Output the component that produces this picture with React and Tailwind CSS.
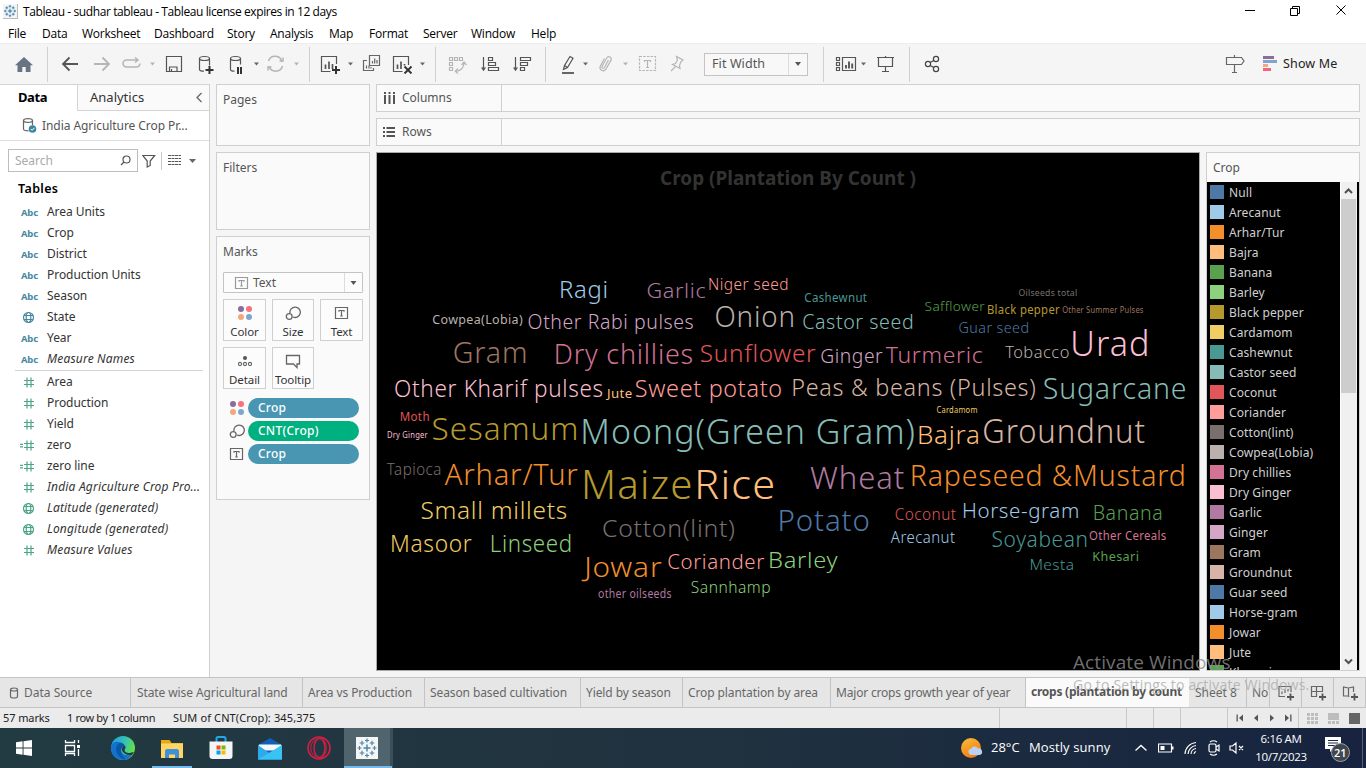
import React from "react";

const C = {
  blue: "#4e79a7", sky: "#a0cbe8", orange: "#f28e2b", peach: "#ffbe7d", green: "#59a14f",
  lime: "#8cd17d", olive: "#b6992d", yellow: "#f1ce63", teal: "#499894", aqua: "#86bcb6",
  red: "#e15759", salmon: "#ff9d9a", gray: "#79706e", silver: "#bab0ac", rose: "#d37295",
  pink: "#fabfd2", purple: "#b07aa1", lilac: "#d4a6c8", brown: "#9d7660", tan: "#d7b5a6",
};

// text, left edge, right edge, baseline, font size, colour
const WORDS = [
  ["Ragi", 561, 607, 298, 22.5, C.sky],
  ["Garlic", 647.7, 705.3, 298, 20.5, C.purple],
  ["Niger seed", 709.3, 787.7, 290, 15.5, C.salmon],
  ["Cowpea(Lobia)", 433, 522.7, 324, 12.6, C.silver],
  ["Other Rabi pulses", 528.7, 693.3, 328.3, 19.6, C.lilac],
  ["Onion", 716, 793.5, 326.7, 28, C.silver],
  ["Gram", 454.3, 526, 362.7, 28, C.brown],
  ["Dry chillies", 556, 692.7, 363.7, 26, C.rose],
  ["Sunflower", 701, 815.7, 361.7, 23, C.red],
  ["Other Kharif pulses", 395.3, 602.7, 396.7, 22.4, C.pink],
  ["Jute", 606, 632, 397.7, 12, C.peach],
  ["Sweet potato", 636, 781.7, 396.7, 22.6, C.salmon],
  ["Moth", 400.7, 429.3, 421, 12, C.red],
  ["Dry Ginger", 387.7, 427.7, 438, 8.5, C.pink],
  ["Sesamum", 433.3, 576.7, 440, 31, C.olive],
  ["Moong(Green Gram)", 583.3, 915, 443.7, 34.5, C.aqua],
  ["Tapioca", 387, 441, 475, 15.4, C.gray],
  ["Arhar/Tur", 445, 577.7, 485, 29.5, C.orange],
  ["Maize", 584.3, 691.7, 498.7, 39.5, C.olive],
  ["Rice", 697.7, 774.3, 498.7, 40, C.peach],
  ["Small millets", 421.7, 566.7, 519, 23.5, C.yellow],
  ["Cotton(lint)", 603.3, 735, 537, 24, C.gray],
  ["Masoor", 392, 471.7, 552, 23, C.yellow],
  ["Linseed", 491.7, 571, 552, 23, C.lime],
  ["Jowar", 582, 661.7, 576.7, 27.5, C.orange],
  ["Coriander", 668.3, 764.3, 569, 20.5, C.salmon],
  ["Barley", 770, 837.7, 568, 22, C.lime],
  ["Sannhamp", 691.7, 770.3, 593, 15.3, C.lime],
  ["other oilseeds", 598.7, 671.3, 597.7, 11.5, C.purple],
  ["Cashewnut", 805, 867, 302, 12, C.teal],
  ["Castor seed", 803.3, 912.7, 328.3, 19.5, C.aqua],
  ["Safflower", 925.3, 984.7, 310.3, 13, C.green],
  ["Black pepper", 988, 1059.7, 313.3, 12.3, C.olive],
  ["Oilseeds total", 1019, 1076.7, 295.7, 9, C.gray],
  ["Other Summer Pulses", 1062.7, 1143.3, 312.7, 8, C.brown],
  ["Guar seed", 959.3, 1028.3, 333, 15, C.blue],
  ["Urad", 1073.3, 1147.7, 356, 34.5, C.pink],
  ["Tobacco", 1005.3, 1069, 358, 16.5, C.silver],
  ["Ginger", 821.3, 882.7, 363, 19, C.lilac],
  ["Turmeric", 886, 982.3, 362.7, 22, C.rose],
  ["Peas & beans (Pulses)", 793.3, 1035.7, 395.7, 23.5, C.tan],
  ["Sugarcane", 1044.3, 1186, 398.7, 28, C.aqua],
  ["Cardamom", 937, 977, 412.7, 8, C.yellow],
  ["Bajra", 919, 979.3, 443.7, 25, C.peach],
  ["Groundnut", 984, 1145, 442.7, 31.5, C.tan],
  ["Wheat", 810.3, 904.3, 488.7, 30.5, C.purple],
  ["Rapeseed &Mustard", 912.3, 1184.3, 485.7, 29.5, C.orange],
  ["Potato", 780, 869.3, 530.7, 28.5, C.blue],
  ["Coconut", 895.7, 956, 520, 15.5, C.red],
  ["Horse-gram", 963.7, 1078.3, 518, 20.5, C.sky],
  ["Banana", 1094.3, 1162.3, 519.7, 19.5, C.green],
  ["Arecanut", 891, 955, 543, 15.5, C.sky],
  ["Soyabean", 992.7, 1087, 547, 20.8, C.teal],
  ["Other Cereals", 1089.7, 1166, 540, 12.3, C.rose],
  ["Mesta", 1030.7, 1073.7, 570, 15, C.teal],
  ["Khesari", 1093.3, 1138.3, 561, 12.3, C.green],
];

const LEGEND = [
  ["Null", C.blue], ["Arecanut", C.sky], ["Arhar/Tur", C.orange], ["Bajra", C.peach],
  ["Banana", C.green], ["Barley", C.lime], ["Black pepper", C.olive], ["Cardamom", C.yellow],
  ["Cashewnut", C.teal], ["Castor seed", C.aqua], ["Coconut", C.red], ["Coriander", C.salmon],
  ["Cotton(lint)", C.gray], ["Cowpea(Lobia)", C.silver], ["Dry chillies", C.rose], ["Dry Ginger", C.pink],
  ["Garlic", C.purple], ["Ginger", C.lilac], ["Gram", C.brown], ["Groundnut", C.tan],
  ["Guar seed", C.blue], ["Horse-gram", C.sky], ["Jowar", C.orange], ["Jute", C.peach], ["Khesari", C.green],
];

// side bearings of the first and last letters, in em
const lead = (t) => (/^[CGOSo]/.test(t) ? 0.055 : /^J/.test(t) ? -0.08 : /^[ATW]/.test(t) ? 0.01 : 0.085);
const trail = (t) => (/[imnuld]$/.test(t) ? 0.08 : /[rty)]$/.test(t) ? 0.03 : 0.05);

function WordCloud() {
  return (
    <svg className="block" width="822" height="516" viewBox="377 153 822 516" fontFamily="'Noto Sans','Open Sans',sans-serif">
      <text x="660" y="185" fontSize="19" fontWeight="700" fill="#333" textLength="256" lengthAdjust="spacingAndGlyphs">Crop (Plantation By Count )</text>
      {WORDS.map(([t, l, r, y, s, c]) => (
        <text key={t} x={l - s * lead(t)} y={y + 0.4} fontSize={s * 1.02} fill={c} fontWeight={s < 13 ? 400 : 300}
          letterSpacing={s * 0.03} textLength={r - l + s * (lead(t) + trail(t))} lengthAdjust="spacingAndGlyphs">{t}</text>
      ))}
    </svg>
  );
}

/* Toolbar glyph: its viewBox starts at the glyph's own x on the bar. */
function G({ x, w, c = "", color = "#555", children }) {
  return (
    <svg className={"shrink-0 " + c} width={w} height="20" viewBox={`${x} 54 ${w} 20`} fill="none" stroke={color} strokeWidth="1.2">
      {children}
    </svg>
  );
}
function Caret({ c = "", color = "#666" }) {
  return <svg className={"shrink-0 " + c} width="8" height="6" viewBox="0 0 8 6"><path d="M1 1.500h5L3.500 4.500z" fill={color} /></svg>;
}
const Sep = ({ c = "" }) => <div className={"h-[35px] w-px shrink-0 bg-[#cfcfcf] " + c} />;
const D = "#b5b5b5";

function Toolbar() {
  return (
    <div className="flex h-[41px] shrink-0 items-center border-t border-[#ededed] bg-[#f5f5f5]">
      <G x={14} w={20} c="ml-[14px]" color="none"><path d="M24 57l-9 8.300h2.500V72h4.800v-5h3.400v5h4.800v-6.700H33z" fill="#687482" /></G>
      <Sep c="ml-[13px]" />
      <G x={60} w={20} c="ml-[12px]"><path d="M78 64H63M69.500 57.500L63 64l6.500 6.500" strokeWidth="1.800" /></G>
      <G x={92} w={20} c="ml-[12px]" color={D}><path d="M94 64h15M102.500 57.500L109 64l-6.500 6.500" strokeWidth="1.800" /></G>
      <G x={122} w={20} c="ml-[10px]" color={D}><path d="M137 60h-10.500a3.500 3.500 0 0 0 0 7h10a3.500 3.500 0 0 0 3.500-3.500M135 57.500l3 2.500-3 2.500" strokeWidth="1.500" /></G>
      <Caret c="ml-[7px]" color={D} />
      <G x={164} w={20} c="ml-[7px]"><path d="M166.500 56.500h15v15h-15zM169.500 71.500v-4.500h7.500v4.500M171.500 69v2" /></G>
      <G x={196} w={20} c="ml-[12px]">
        <path d="M199.500 58.500v11c0 1 2 1.700 4.500 1.700M209.500 58.500v7" /><ellipse cx="204.500" cy="58.500" rx="5" ry="2" />
        <path d="M209.500 66v8M205.500 70h8" stroke="#333" strokeWidth="2" />
      </G>
      <G x={228} w={18} c="ml-[12px]">
        <path d="M230.500 58.500v11c0 1 2 1.700 4 1.700M240.500 58.500v6" /><ellipse cx="235.500" cy="58.500" rx="5" ry="2" />
        <path d="M238 67v7M241 67v7" stroke="#333" strokeWidth="2" />
      </G>
      <Caret c="ml-[7px]" />
      <G x={265} w={20} c="ml-[4px]" color={D}><path d="M268.500 61a7 7 0 0 1 13.500 1M282.500 66a7 7 0 0 1-13.500 0M279.500 61h3.500v-3.500M271.500 67H268v3.500" strokeWidth="1.500" /></G>
      <Caret c="ml-[8px]" color={D} />
      <Sep c="ml-[8px]" />
      <G x={320} w={22} c="ml-[10px]">
        <path d="M336.500 64v-7.500h-15v15h9" /><path d="M325.500 69v-4.500M329 69v-7.500M332.500 69v-5" strokeWidth="1.700" />
        <path d="M336 66v8M332 70h8" stroke="#333" strokeWidth="2" />
      </G>
      <Caret c="ml-[5px]" />
      <G x={362} w={20} c="ml-[7px]" color="#666">
        <path d="M369.500 55.500h10v10h-10zM367 60.500h-3.500v10h10V68" /><path d="M372.500 63.500v-2.500M374.700 63.500v-5M377 63.500v-3.500M366.500 68.500v-3M369 68.500v-3M371 68.500v-1.500" />
      </G>
      <G x={392} w={22} c="ml-[10px]">
        <path d="M408.500 65v-8.500h-15v15h9" /><path d="M397.500 69v-4.500M401 69v-7.500M404.500 65.500v-1.500" strokeWidth="1.700" />
        <path d="M404.500 66.500l7 7M411.500 66.500l-7 7" stroke="#333" strokeWidth="1.900" />
      </G>
      <Caret c="ml-[5px]" />
      <Sep c="ml-[8px]" />
      <G x={447} w={20} c="ml-[11px]" color={D}>
        <path d="M449.500 57.500h3v3h-3zM454.500 57.500h3v3h-3zM459.500 57.500h3v3h-3zM449.500 62.500h3v3h-3zM449.500 67.500h3v3h-3z" />
        <path d="M464 62.500c0 5-2.500 8-8 9M461.500 65l2.500-3 2.500 3M458 68.500l-2.700 2.700 2.700 2.500" />
      </G>
      <G x={480} w={20} c="ml-[13px]"><path d="M483.500 57v12M488.500 57.500h4v3h-4zM488.500 62.500h7v3h-7zM488.500 67.500h10v3h-10z" /><path d="M481 67.500h5l-2.500 3.800z" fill="#555" stroke="none" /></G>
      <G x={512} w={20} c="ml-[12px]"><path d="M515.500 57v12M520.500 57.500h10v3h-10zM520.500 62.500h7v3h-7zM520.500 67.500h4v3h-4z" /><path d="M513 67.500h5l-2.500 3.800z" fill="#555" stroke="none" /></G>
      <Sep c="ml-[13px]" />
      <G x={560} w={16} c="ml-[14px]"><path d="M563.500 69.500l1-4 5.500-9 3 1.700-5.500 9.300zM564.500 65.500l3 2" /><path d="M562 73h12" strokeWidth="1.800" /></G>
      <Caret c="ml-[6px]" />
      <G x={597} w={18} c="ml-[7px]" color={D}><path d="M608.500 60l-4 7.500c-1.200 1.700-3.200.5-2.400-1.300l4.500-8c1.600-3 5.800-1 4.300 2.200l-5 8.800c-2.200 3.200-7.200.8-5.500-3.200l4-7.500" /></G>
      <Caret c="ml-[7px]" color={D} />
      <G x={638} w={20} c="ml-[8px]" color={D}><path d="M639.500 56.500h16v14h-16z" strokeDasharray="2.500 1.200" /><path d="M644.500 62v-1.500h6V62M647.500 60.500v7M646 67.500h3" /></G>
      <G x={669} w={18} c="ml-[11px]" color={D}><path d="M676.500 56.500l6.500 3.500-1.300 1.200-.7.300-1.500 4 .5 3-7.500-4 3-1 2-3.500zM675.500 66.500l-4.500 4.500" /></G>
      <div className="ml-[17px] flex h-[23px] w-[104px] shrink-0 items-center border border-[#c4c4c4] bg-[#f8f8f8]">
        <span className="grow pl-[7px] text-[12.500px] tracking-[0.100px] text-[#555]">Fit Width</span>
        <span className="flex h-full w-[19px] items-center justify-center border-l border-[#dcdcdc]"><svg width="8" height="6"><path d="M1 1h6L4 5z" fill="#555" /></svg></span>
      </div>
      <Sep c="ml-[15px]" />
      <G x={835} w={22} c="ml-[11px]">
        <path d="M836.500 57.500h3v3h-3zM836.500 62.500h3v3h-3zM836.500 67.500h3v3h-3zM842.500 57.500h13v13h-13z" /><path d="M846 68.500v-3.500M849 68.500v-7M852.200 68.500v-5" strokeWidth="1.900" />
      </G>
      <Caret c="ml-[3px]" />
      <G x={876} w={20} c="ml-[8px]"><path d="M877 57.500h17M878.500 57.500v9h14v-9M885.500 66.500v5M882 71.500h7M885.500 56v1.500" /></G>
      <Sep c="ml-[13px]" />
      <G x={923} w={20} c="ml-[13px]" color="#444"><circle cx="928" cy="64" r="2.600" /><circle cx="936" cy="59" r="2.600" /><circle cx="936" cy="69" r="2.600" /><path d="M930.200 62.600l3.600-2.200M930.200 65.400l3.600 2.200" /></G>
      <G x={1225} w={20} c="ml-auto" color="#666"><path d="M1226.500 57.500h15l2.500 3.500-2.500 3.500h-15zM1234.500 55v2.500M1234.500 64.500v8M1232 72.500h5" /></G>
      <G x={1262} w={16} c="ml-[17px]" color="none"><path d="M1263 56h11v3h-11z" fill="#8a6d99" /><path d="M1263 60h14v3h-14z" fill="#7fa5cf" /><path d="M1263 64h5v3h-5z" fill="#f5a87f" /><path d="M1263 68h8v3h-8z" fill="#f6637c" /></G>
      <span className="ml-[5px] mr-[28px] w-[55px] whitespace-nowrap text-[12.500px] tracking-[0.150px] text-[#222]">Show Me</span>
    </div>
  );
}

function FieldIcon({ k, color }) {
  if (k === "abc") return <span className="w-[26px] shrink-0 text-[9.500px] font-bold leading-none tracking-[-0.200px] text-[#4a88a0]">Abc</span>;
  return (
    <svg className="shrink-0" width="26" height="16" viewBox="0 0 26 16" fill="none" stroke={color} strokeWidth="1.200" overflow="visible">
      {k === "globe"
        ? <><circle cx="7.500" cy="7.500" r="5" /><ellipse cx="7.500" cy="7.500" rx="2.300" ry="5" /><path d="M3 5.500h9M3 9.500h9" /></>
        : <><path d="M6 2.500v10M10 2.500v10M3 5.500h10M3 9.500h10" />{k === "calc" && <path d="M-1 6.300h3M-1 8.900h3" />}</>}
    </svg>
  );
}
function Field({ k, t, it, color = "#4ba586" }) {
  return (
    <div className="flex h-[21px] items-center pl-[21px]">
      <FieldIcon k={k} color={color} />
      <span className={"-mt-px whitespace-nowrap text-[12px] text-[#333] " + (it ? "italic tracking-[0.180px]" : "tracking-[-0.050px]")}>{t}</span>
    </div>
  );
}

function DataPane() {
  return (
    <div className="flex w-[210px] shrink-0 flex-col border-r border-[#cfcfcf] bg-white">
      <div className="flex h-[27px] shrink-0 border-t border-[#d4d4d4]">
        <div className="w-[77px] pl-[18px] pt-[2px] text-[13px] font-bold leading-[20px] tracking-[-0.400px] text-black">Data</div>
        <div className="flex grow items-center border-b border-l border-[#d4d4d4] bg-[#fafafa] pl-[12px]">
          <span className="grow text-[13px] text-[#333]">Analytics</span>
          <svg className="mr-[6px]" width="8" height="11" fill="none" stroke="#666" strokeWidth="1.300"><path d="M6.500 1L2 5.500 6.500 10" /></svg>
        </div>
      </div>
      <div className="flex h-[30px] shrink-0 items-center border-b border-[#dedede] pl-[22px]">
        <svg width="16" height="17" fill="none" stroke="#666" strokeWidth="1.200">
          <path d="M1.500 3.500v8.500c0 1 2 1.800 5 1.800M10.500 3.500v5" /><ellipse cx="6" cy="3.500" rx="4.500" ry="1.900" />
          <circle cx="10.500" cy="12" r="3.800" fill="#3c86a3" stroke="none" /><path d="M8.800 12l1.300 1.300 2.300-2.500" stroke="#fff" strokeWidth="1" />
        </svg>
        <span className="pl-[4px] text-[12px] tracking-[-0.070px] text-[#555]">India Agriculture Crop Pr...</span>
      </div>
      <div className="flex h-[36px] shrink-0 items-center pl-[8px] pt-[3px]">
        <div className="flex h-[23px] w-[130px] items-center border border-[#bdbdbd] pl-[6px] pr-[6px]">
          <span className="grow text-[12px] text-[#aaa]">Search</span>
          <svg width="11" height="11" fill="none" stroke="#555" strokeWidth="1.200"><circle cx="6.500" cy="4.500" r="3.500" /><path d="M4 7L1 10" /></svg>
        </div>
        <svg className="ml-[4px]" width="14" height="14" fill="none" stroke="#555" strokeWidth="1.200"><path d="M.7 1.500h12L8.200 7v4.500L5.200 13V7z" /></svg>
        <div className="ml-[5px] h-[18px] w-px bg-[#ccc]" />
        <svg className="ml-[6px]" width="13" height="11" fill="none" stroke="#555" strokeWidth="1"><path d="M0 .5h13M0 3.500h13M0 6.500h13M0 9.500h13" strokeDasharray="3 .500" /></svg>
        <svg className="ml-[7px]" width="9" height="6"><path d="M1 1h7L4.500 5z" fill="#666" /></svg>
      </div>
      <div className="h-[25px] shrink-0 pl-[18px] pt-[2px] text-[12.500px] font-semibold leading-[20px] tracking-[0.350px] text-black">Tables</div>
      <Field k="abc" t="Area Units" />
      <Field k="abc" t="Crop" />
      <Field k="abc" t="District" />
      <Field k="abc" t="Production Units" />
      <Field k="abc" t="Season" />
      <Field k="globe" t="State" color="#4a88a0" />
      <Field k="abc" t="Year" />
      <Field k="abc" t="Measure Names" it />
      <div className="mb-px ml-[15px] mr-[6px] h-px shrink-0 bg-[#d4d4d4]" />
      <Field k="num" t="Area" />
      <Field k="num" t="Production" />
      <Field k="num" t="Yield" />
      <Field k="calc" t="zero" />
      <Field k="calc" t="zero line" />
      <Field k="num" t="India Agriculture Crop Pro..." it />
      <Field k="globe" t="Latitude (generated)" it />
      <Field k="globe" t="Longitude (generated)" it />
      <Field k="num" t="Measure Values" it />
    </div>
  );
}

const Dots = () => (
  <svg width="16" height="16"><circle cx="4" cy="4" r="3" fill="#8a6d99" /><circle cx="12" cy="4" r="3" fill="#f9707f" /><circle cx="4" cy="12" r="3" fill="#f3a77c" /><circle cx="12" cy="12" r="3" fill="#7fa5cf" /></svg>
);
const SizeI = () => (
  <svg width="16" height="16" fill="none" stroke="#666" strokeWidth="1.300"><path d="M5 8.200A5.200 5.200 0 1 1 8 12" /><circle cx="4.200" cy="11.500" r="2.900" /></svg>
);
const TextI = ({ color = "#666" }) => (
  <svg width="16" height="16" fill="none" stroke={color} strokeWidth="1.200"><path d="M1.500 2.500h12v11h-12zM5 6.800V5.500h5v1.300M7.500 5.500v5.500M6.200 11h2.600" /></svg>
);
const DetailI = () => (
  <svg width="16" height="16" fill="none" stroke="#666" strokeWidth="1.100"><circle cx="8" cy="5" r="2" fill="#555" stroke="none" /><circle cx="3" cy="11" r="1.600" /><circle cx="8" cy="11" r="1.600" /><circle cx="13" cy="11" r="1.600" /></svg>
);
const TipI = () => (
  <svg width="16" height="16" fill="none" stroke="#666" strokeWidth="1.300"><path d="M1.500 2.500h13v8.500h-2.500v3.500L8.500 11h-7z" /></svg>
);

function MarkBtn({ icon, t, w = "w-[43px]" }) {
  return (
    <div className={"flex h-[42px] flex-col items-center border border-[#cfcfcf] bg-[#fcfcfc] pt-[5px] " + w}>
      {icon}
      <span className="mt-[4px] whitespace-nowrap text-[11.500px] leading-[14px] tracking-[-0.100px] text-[#333]">{t}</span>
    </div>
  );
}
function Pill({ icon, t, bg }) {
  return (
    <div className="flex h-[20px] items-center">
      <span className="flex w-[19px] shrink-0 justify-end">{icon}</span>
      <span className={"ml-[6px] h-[20px] w-[111px] rounded-full pl-[10px] text-[12px] font-medium leading-[19px] tracking-[0.250px] text-white " + bg}>{t}</span>
    </div>
  );
}
const Card = ({ t, c, children }) => (
  <div className={"shrink-0 border border-[#cfcfcf] bg-[#fafafa] pl-[6px] pt-[7px] text-[12px] leading-[16px] text-[#555] " + c}>{t}{children}</div>
);

function Cards() {
  return (
    <div className="ml-[6px] flex w-[154px] shrink-0 flex-col gap-[6px]">
      <Card t="Pages" c="h-[62px]" />
      <Card t="Filters" c="h-[78px]" />
      <Card t="Marks" c="h-[264px]">
        <div className="mt-[12px] flex h-[21px] w-[140px] items-center rounded-[1px] border border-[#c4c4c4] bg-[#fcfcfc]">
          <span className="ml-[10px] flex w-[16px]"><TextI color="#999" /></span>
          <span className="grow pl-[3px] text-[12px]">Text</span>
          <span className="flex h-full w-[18px] items-center justify-center border-l border-[#dcdcdc]"><svg width="8" height="6"><path d="M.5 1h6L3.500 5z" fill="#555" /></svg></span>
        </div>
        <div className="mt-[6px] flex gap-[6px]"><MarkBtn icon={<Dots />} t="Color" /><MarkBtn icon={<SizeI />} t="Size" w="w-[42px]" /><MarkBtn icon={<TextI />} t="Text" /></div>
        <div className="mt-[6px] flex gap-[6px]"><MarkBtn icon={<DetailI />} t="Detail" /><MarkBtn icon={<TipI />} t="Tooltip" w="w-[42px]" /></div>
        <div className="mt-[9px] flex flex-col gap-[3px]">
          <Pill icon={<span className="-mr-[3px] flex"><Dots /></span>} t="Crop" bg="bg-[#4996b2]" />
          <Pill icon={<span className="-mr-[3px] flex"><SizeI /></span>} t="CNT(Crop)" bg="bg-[#00b180]" />
          <Pill icon={<span className="-mr-[3px] flex"><TextI /></span>} t="Crop" bg="bg-[#4996b2]" />
        </div>
      </Card>
    </div>
  );
}

function Shelf({ t, icon }) {
  return (
    <div className="flex h-[28px] shrink-0 border border-[#cfcfcf] bg-[#fafafa]">
      <div className="flex w-[125px] items-center border-r border-[#cfcfcf] pl-[6px] text-[12px] text-[#555]">
        <svg width="13" height="12" fill="#555">{icon}</svg><span className="pl-[6px]">{t}</span>
      </div>
    </div>
  );
}

function Legend() {
  return (
    <div className="flex w-[154px] shrink-0 flex-col border border-[#cfcfcf] bg-[#fafafa]">
      <div className="h-[29px] shrink-0 pl-[6px] pt-[7px] text-[12px] leading-[16px] text-[#555]">Crop</div>
      <div className="flex h-[488px] overflow-hidden bg-black">
        <div className="w-[133px] overflow-hidden">
          {LEGEND.map(([t, c]) => (
            <div key={t} className="flex h-[20px] items-center pl-[3px]">
              <svg width="14" height="14"><rect width="14" height="14" fill={c} /></svg>
              <span className="whitespace-nowrap pl-[5px] pt-[2px] text-[12px] tracking-[0.100px] text-[#d0d0d0]">{t}</span>
            </div>
          ))}
        </div>
        <div className="flex w-[17px] flex-col border-l border-white bg-[#f0f0f0]">
          <svg width="16" height="17" fill="none" stroke="#505050" strokeWidth="2"><path d="M4 11L7.500 7.500l3.500 3.500" /></svg>
          <div className="h-[194px] w-[15px] bg-[#cdcdcd]" />
          <svg className="mt-auto" width="16" height="17" fill="none" stroke="#505050" strokeWidth="2"><path d="M4 6.500l3.500 3.500 3.500-3.500" /></svg>
        </div>
      </div>
    </div>
  );
}

const Tab = ({ t, w, pl = "pl-[6px]", tr = "tracking-[-0.100px]" }) => (
  <div className={"h-full shrink-0 overflow-hidden whitespace-nowrap border-r border-[#c4c4c4] leading-[29px] " + w + " " + pl + " " + tr}>{t}</div>
);
const TabIcon = ({ children }) => (
  <div className="flex w-[32px] shrink-0 items-center justify-center border-l border-[#c4c4c4]">
    <svg width="18" height="18" fill="none" stroke="#666" strokeWidth="1.200">{children}<path d="M13.500 9.500v7M10 13h7" stroke="#555" strokeWidth="1.800" /></svg>
  </div>
);

function SheetTabs() {
  return (
    <div className="flex h-[31px] shrink-0 border-b border-t border-[#c4c4c4] bg-[#e6e6e6] text-[12px] text-[#666]">
      <div className="flex w-[131px] shrink-0 items-center border-r border-[#c4c4c4] pl-[9px]">
        <svg width="10" height="12" fill="none" stroke="#666" strokeWidth="1.200"><path d="M1.500 2.500v7c0 2 7 2 7 0v-7" /><ellipse cx="5" cy="2.500" rx="3.500" ry="1.500" /></svg>
        <span className="pl-[5px]">Data Source</span>
      </div>
      <Tab t="State wise Agricultural land" w="w-[172px]" />
      <Tab t="Area vs Production" w="w-[122px]" pl="pl-[5px]" />
      <Tab t="Season based cultivation" w="w-[156px]" pl="pl-[5px]" />
      <Tab t="Yield by season" w="w-[102px]" pl="pl-[5px]" />
      <Tab t="Crop plantation by area" w="w-[148px]" pl="pl-[5px]" />
      <Tab t="Major crops growth year of year" w="w-[195px]" pl="pl-[5px]" tr="tracking-[-0.190px]" />
      <div className="h-full w-[163px] shrink-0 overflow-hidden whitespace-nowrap bg-[#fafafa] pl-[5px] text-[12px] font-bold leading-[27px] tracking-[-0.240px] text-[#555]">crops (plantation by count</div>
      <Tab t="Sheet 8" w="w-[58px]" tr="tracking-[0px]" />
      <div className="w-[22px] shrink-0 overflow-hidden pl-[5px] leading-[29px]">Nor</div>
      <TabIcon><path d="M14 8V2.500h-12v10h6M5 10V7.500M8 9V5.500M11 7.500V5" /></TabIcon>
      <TabIcon><path d="M13.500 8V2.500h-11v10H8M2.500 7.500h11M7.500 2.500v10" /></TabIcon>
      <TabIcon><path d="M8 13l-.5-1-5 0v-9l5 1 5-1v5M7.500 4v8" /></TabIcon>
      <div className="w-px bg-[#c4c4c4]" />
    </div>
  );
}

function StatusBar() {
  return (
    <div className="flex h-[20px] shrink-0 bg-[#ebebeb] text-[11px] leading-[20px] text-[#222]">
      <span className="w-[64px] pl-[3px] tracking-[-0.100px]">57 marks</span>
      <span className="w-[109px] pl-[3px] tracking-[-0.360px]">1 row by 1 column</span>
      <span className="w-[300px] tracking-[0.120px]">SUM of CNT(Crop): 345,375</span>
      <div className="ml-auto flex items-center">
        <div className="h-full w-[127px] border-l border-[#c8c8c8]" />
        <div className="h-full w-[27px] border-l border-[#c8c8c8]" />
        <div className="h-full w-[27px] border-l border-[#c8c8c8]" />
        <div className="h-full w-[47px] border-l border-[#c8c8c8]" />
        <div className="flex h-full w-[71px] items-center gap-[8px] border-l border-[#c8c8c8] pl-[8px]">
          <svg width="8" height="8" fill="#555"><path d="M0.500 .5h1.300v7H.5zM7 .5v7L3 4z" /></svg>
          <svg width="8" height="8" fill="#555"><path d="M6 .5v7L2 4z" /></svg>
          <svg width="8" height="8" fill="#555"><path d="M2 .5v7L6 4z" /></svg>
          <svg width="8" height="8" fill="#555"><path d="M6.200 .5h1.300v7H6.200zM1 .5v7L5 4z" /></svg>
        </div>
        <div className="flex h-full w-[68px] items-center gap-[10px] border-l border-[#c8c8c8] pl-[8px]">
          <svg width="11" height="11" fill="#bdbdbd"><path d="M0 0h3v3H0zM4 0h3v3H4zM8 0h3v3H8zM0 4h3v3H0zM4 4h3v3H4zM8 4h3v3H8zM0 8h3v3H0zM4 8h3v3H4zM8 8h3v3H8z" /></svg>
          <svg width="11" height="11" fill="#bdbdbd"><path d="M0 0h11v7H0zM0 8h3v3H0zM4 8h3v3H4zM8 8h3v3H8z" /></svg>
          <svg width="11" height="11" fill="#666"><path d="M0 0h11v11H0z" /></svg>
        </div>
      </div>
    </div>
  );
}

const Plus = ({ x, y, r, c = "#4d86a8", w = 1.2 }) => <path d={`M${x - r} ${y}h${2 * r}M${x} ${y - r}v${2 * r}`} stroke={c} strokeWidth={w} />;
function TableauMark({ size, bg = "#fff", b = "#4d86a8" }) {
  return (
    <svg width={size} height={size} viewBox="0 0 22 22">
      <rect width="22" height="22" fill={bg} />
      <Plus x={11} y={11} r={3.500} c={b} w={1.500} />
      <Plus x={11} y={3.500} r={2} c={b} /><Plus x={11} y={18.500} r={2} c={b} /><Plus x={3.500} y={11} r={2} c={b} /><Plus x={18.500} y={11} r={2} c={b} />
      <Plus x={6} y={6} r={2.300} c={b} /><Plus x={16} y={6} r={2.300} c={b} /><Plus x={6} y={16} r={2.300} c={b} /><Plus x={16} y={16} r={2.300} c={b} />
    </svg>
  );
}

const TI = ({ c = "", children }) => <div className={"flex h-[40px] w-[49px] shrink-0 items-center justify-center " + c}>{children}</div>;

function Taskbar() {
  return (
    <div className="flex h-[40px] shrink-0 items-center bg-linear-to-r from-[#223a42] via-[#20323f] to-[#17233f] font-['Open_Sans','Noto_Sans',sans-serif] text-white">
      <TI c="-ml-px"><svg width="16" height="16" fill="#fff"><path d="M0 2.300L6.600 1.300v6.200H0zM7.500 1.200L16 0v7.500H7.500zM0 8.500h6.600v6.200L0 13.700zM7.500 8.500H16V16l-8.500-1.200z" /></svg></TI>
      <TI><svg width="18" height="16" fill="none" stroke="#fff" strokeWidth="1.300"><path d="M1.500 0v2.500h9V0M1.500 5.500h9v6h-9zM1.500 16v-2.500h9V16M14.500 0v3M14.500 9v7" /><path d="M13 5h3v3h-3z" fill="#fff" stroke="none" /></svg></TI>
      <TI c="ml-px">
        <svg width="24" height="24" viewBox="0 0 24 24">
          <defs><linearGradient id="e1" x1="0" y1="0" x2="1" y2=".3"><stop offset="0" stopColor="#1c9de0" /><stop offset=".6" stopColor="#35c1b5" /><stop offset="1" stopColor="#63df4c" /></linearGradient></defs>
          <circle cx="12" cy="12" r="12" fill="url(#e1)" />
          <path d="M0 11C1 6 5 5.500 8 6c4 .5 6 3 6 5-1-.5-4 0-4 3 0 4 5 6.500 11.500 4.500C18 23 15 24 12 24 5 24-.500 18 0 11z" fill="#1173cf" />
          <path d="M9 7c-4 2-5 6-3 10 1.500 3.500 5 6 9 6.500-3-2-5-5.500-5-9 0-2 .8-3.500 4-3.500 0-2-2-4-5-4z" fill="#0c56a4" />
          <path d="M14.500 10.500c.5 1.500-1 2.300-1 3.700 0 2 3 3.300 6 2.500l3.500-.7-1.500 2.500c-4 1.500-9-.5-10.500-4-.5-3 1.500-4 3.500-4z" fill="#21363f" />
        </svg>
      </TI>
      <TI c="relative">
        <svg width="22" height="19"><path d="M0 1h8.500l2 3H22v14H0z" fill="#e9a913" /><path d="M0 4.500h22V19H0z" fill="#ffd563" /><path d="M4 19v-7.500l1.500-1.500h11L18 11.500V19h-4v-3.500H8V19z" fill="#3f8fd9" /></svg>
        <div className="absolute bottom-0 left-[5px] h-[2px] w-[40px] bg-[#76b9ed]" />
      </TI>
      <TI>
        <svg width="24" height="24"><path d="M7.500 6V2.500Q7.500 1 9 1h6q1.500 0 1.500 1.500V6" fill="none" stroke="#1fa9e6" strokeWidth="2" /><path d="M.5 5.500h23V20q0 3-3 3h-17q-3 0-3-3z" fill="#f3f5f6" /><path d="M7.500 9.500h4v4h-4z" fill="#f25022" /><path d="M12.500 9.500h4v4h-4z" fill="#7fba00" /><path d="M7.500 14.500h4v4h-4z" fill="#00a4ef" /><path d="M12.500 14.500h4v4h-4z" fill="#ffb900" /></svg>
      </TI>
      <TI><svg width="24" height="23"><path d="M0 8l12-7 12 7v14.500H0z" fill="#1060b5" /><path d="M1 7.500h22v6H1z" fill="#f5f8fa" /><path d="M0 8l12 8.500L24 8v14.500H0z" fill="#2fa9ea" /><path d="M0 22.500L24 8v14.500z" fill="#39c3f5" /></svg></TI>
      <TI><svg width="24" height="24" fill="none" stroke="#d41e45"><circle cx="12" cy="12" r="11" strokeWidth="1.600" /><ellipse cx="12.500" cy="12" rx="5.500" ry="9.500" strokeWidth="1.500" /><path d="M14 1.500c7 4 7 17 0 21M9 3C2 7 2 17 9 21" /></svg></TI>
      <TI c="relative ml-px w-[48px] border-r-[3px] border-[#3b4d58] bg-[#50646e]"><TableauMark size="22" bg="#f5f5f5" /><div className="absolute bottom-0 left-0 h-[2px] w-[48px] bg-[#76b9ed]" /></TI>

      <svg className="ml-auto" width="22" height="22"><defs><linearGradient id="s1" x1="0" y1="0" x2=".5" y2="1"><stop offset="0" stopColor="#f5c13b" /><stop offset="1" stopColor="#f77a12" /></linearGradient></defs><circle cx="10" cy="11" r="10" fill="url(#s1)" /><path d="M10 18a3.200 3.200 0 0 1 0-6.300 4 4 0 0 1 7-.2 3.300 3.300 0 0 1 1.500 6.500z" fill="#b8d2f7" /></svg>
      <span className="ml-[8px] w-[38px] whitespace-nowrap text-[13px]">28°C</span>
      <span className="w-[106px] whitespace-nowrap text-[13px] tracking-[0.100px]">Mostly sunny</span>
      <svg width="12" height="8" fill="none" stroke="#fff" strokeWidth="1.300"><path d="M.5 6.500L6 1.500l5.500 5" /></svg>
      <svg className="ml-[11px]" width="16" height="10" fill="none" stroke="#fff"><path d="M.5 1h13v8H.5z" strokeWidth="1.200" /><path d="M2.500 3h4v4h-4zM14 3.500h1.500v3H14z" fill="#fff" stroke="none" /></svg>
      <svg className="ml-[10px]" width="13" height="14" fill="none" stroke="#fff" strokeWidth="1.100"><path d="M1 13A12 12 0 0 1 12 1.500M4 13a9 9 0 0 1 8-8.500M7 13a6 6 0 0 1 5-5.500M10 13a3 3 0 0 1 2-2.500" /></svg>
      <svg className="ml-[11px]" width="12" height="16" fill="none" stroke="#fff" strokeWidth="1.200"><rect x="1" y="4" width="7" height="8" rx="1.500" /><path d="M8 7l3-2v6l-3-2M2 2Q5.500-.5 9 2M2 14q3.500 2.500 7 0" /></svg>
      <svg className="ml-[9px]" width="16" height="14" fill="none" stroke="#fff" strokeWidth="1.200"><path d="M1 5v4h2.500L7 12V2L3.500 5zM10 5l4 4M14 5l-4 4" /></svg>
      <div className="ml-[8px] flex w-[56px] flex-col items-center whitespace-nowrap text-[11.500px] leading-[18px] tracking-[-0.350px]"><span>6:16 AM</span><span>10/7/2023</span></div>
      <div className="relative ml-[15px] mr-[12px] h-[28px] w-[26px]">
        <svg width="26" height="28"><path d="M1 3h16v12H9l-3 3v-3H1z" fill="#fff" /><path d="M4 6.500h10M4 9h10M4 11.500h7" stroke="#1b2a40" /><circle cx="16.500" cy="18.500" r="9" fill="#40474e" stroke="#9aa0a6" /></svg>
        <span className="absolute left-[10px] top-[11px] text-[11px] font-semibold leading-[15px]">21</span>
      </div>
      <div className="h-full w-[4px] border-l border-[#51607a]" />
    </div>
  );
}

export default function App() {
  return (
    <div className="relative flex h-[768px] w-[1366px] flex-col overflow-hidden bg-[#f5f5f5] font-['Noto_Sans','Open_Sans',sans-serif]">
      <div className="flex h-[23px] shrink-0 items-center bg-white font-['Open_Sans','Noto_Sans',sans-serif] text-[12px] text-black">
        <span className="ml-[3px] flex border-b border-r border-[#bbb]"><TableauMark size="14" bg="#f4f4f4" b="#1f6f9c" /></span>
        <span className="ml-[5px] whitespace-nowrap tracking-[-0.400px]">Tableau - sudhar tableau - Tableau license expires in 12 days</span>
        <svg className="ml-auto" width="101" height="14" fill="none" stroke="#000" strokeWidth="1"><path d="M0 5.500h10M45.500 3.500h7v7h-7zM47.500 3.500v-2h7v7h-2M91.500 .5l9 9M100.500 .5l-9 9" /></svg>
        <div className="w-[20px]" />
      </div>
      <nav className="flex h-[20px] shrink-0 items-center whitespace-nowrap bg-white pt-[2px] font-['Open_Sans','Noto_Sans',sans-serif] text-[12px] tracking-[-0.230px] text-black">
        <span className="ml-[8px] w-[34px]">File</span><span className="w-[40px]">Data</span><span className="w-[72px]">Worksheet</span>
        <span className="w-[73px]">Dashboard</span><span className="w-[43px]">Story</span><span className="w-[59px]">Analysis</span>
        <span className="w-[40px]">Map</span><span className="w-[54px]">Format</span><span className="w-[48px]">Server</span>
        <span className="w-[60px]">Window</span><span>Help</span>
      </nav>
      <Toolbar />
      <div className="flex h-[593px] shrink-0">
        <DataPane />
        <Cards />
        <div className="ml-[6px] flex w-[984px] flex-col gap-[6px]">
          <Shelf t="Columns" icon={<path d="M1 0h2v2H1zM5.500 0h2v2h-2zM10 0h2v2h-2zM1 3h2v9H1zM5.500 3h2v9h-2zM10 3h2v9h-2z" />} />
          <Shelf t="Rows" icon={<path d="M0 1h2v2H0zM0 5h2v2H0zM0 9h2v2H0zM3.500 1H12v2H3.500zM3.500 5H12v2H3.500zM3.500 9H12v2H3.500z" />} />
          <div className="flex h-[519px] gap-[6px]">
            <div className="w-[824px] shrink-0 overflow-hidden border border-[#aaa] bg-black"><WordCloud /></div>
            <Legend />
          </div>
        </div>
      </div>
      <SheetTabs />
      <StatusBar />
      <Taskbar />
      <div className="pointer-events-none absolute left-[1073px] top-[649px] whitespace-nowrap font-['Open_Sans','Noto_Sans',sans-serif] text-[#8e8e8e]/80">
        <div className="text-[19px] leading-[26px] tracking-[0.100px]">Activate Windows</div>
        <div className="text-[14px] leading-[20px] tracking-[0.200px] text-[#aaa]/80">Go to Settings to activate Windows.</div>
      </div>
    </div>
  );
}
